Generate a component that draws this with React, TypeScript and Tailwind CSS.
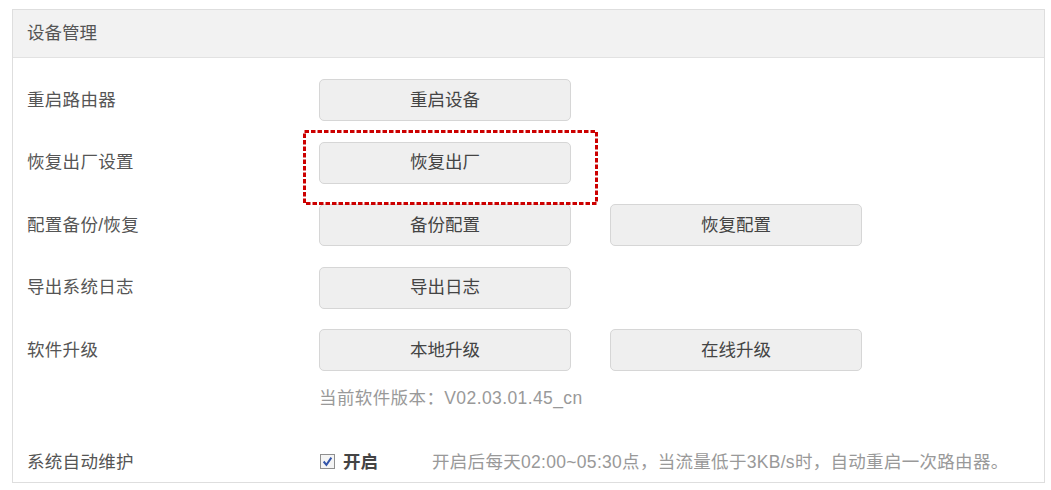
const font = { fontFamily: '"Liberation Sans", "Noto Sans CJK SC", sans-serif' };

const Btn = ({ children }: { children: string }) => (
	<button className="w-[252px] h-[42px] rounded-[5px] border border-[#d6d6d6] bg-[#efefef] text-[17.5px] text-[#444]">
		{children}
	</button>
);

const Row = ({ label, children }: { label: string; children: React.ReactNode }) => (
	<div className="flex items-center">
		<div className="w-[292px] shrink-0 text-[17.5px] text-[#555] tracking-[0.3px]">{label}</div>
		<div className="flex items-center gap-[39px]">{children}</div>
	</div>
);

export default function App() {
	return (
		<div className="w-[1051px] h-[490px] bg-white overflow-hidden" style={font}>
			<div className="ml-[12px] mt-[9px] w-[1033px] h-[474px] border border-[#dedede] flex flex-col">
				<div className="h-[48px] shrink-0 bg-[#f2f2f2] border-b border-[#e2e2e2] pl-[14px] flex items-center text-[17.5px] text-[#555]">
					设备管理
				</div>
				<div className="pl-[14px] pt-[21px] flex flex-col gap-[20.5px]">
					<Row label="重启路由器">
						<Btn>重启设备</Btn>
					</Row>
					<Row label="恢复出厂设置">
						<div className="relative">
							<Btn>恢复出厂</Btn>
							<svg className="absolute left-[-16px] top-[-12px] pointer-events-none" width="296" height="76">
								<rect
									x="1.5"
									y="1.5"
									width="292"
									height="72"
									fill="none"
									stroke="#cc0000"
									strokeWidth="3"
									strokeDasharray="4.5 2"
								/>
							</svg>
						</div>
					</Row>
					<Row label="配置备份/恢复">
						<Btn>备份配置</Btn>
						<Btn>恢复配置</Btn>
					</Row>
					<Row label="导出系统日志">
						<Btn>导出日志</Btn>
					</Row>
					<div>
						<Row label="软件升级">
							<Btn>本地升级</Btn>
							<Btn>在线升级</Btn>
						</Row>
						<div className="ml-[292px] mt-[14px] text-[17.5px] text-[#999] tracking-[0.4px]">当前软件版本：V02.03.01.45_cn</div>
					</div>
					<div className="mt-[17px] flex items-center">
						<div className="w-[292px] shrink-0 text-[17.5px] text-[#555] tracking-[0.3px]">系统自动维护</div>
						<span className="ml-[1px] w-[15px] h-[15px] border border-[#8f8f8f] bg-[#f4f4f4] flex items-center justify-center">
							<svg width="11" height="11" viewBox="0 0 10 10">
								<path d="M1.5 5 L4 8 L8.5 1.5" fill="none" stroke="#3355aa" strokeWidth="1.8" />
							</svg>
						</span>
						<span className="ml-[8px] text-[17.5px] font-bold text-[#444]">开启</span>
						<span className="ml-[54px] text-[17.5px] text-[#999] tracking-[0.3px]">
							开启后每天02:00~05:30点，当流量低于3KB/s时，自动重启一次路由器。
						</span>
					</div>
				</div>
			</div>
		</div>
	);
}
